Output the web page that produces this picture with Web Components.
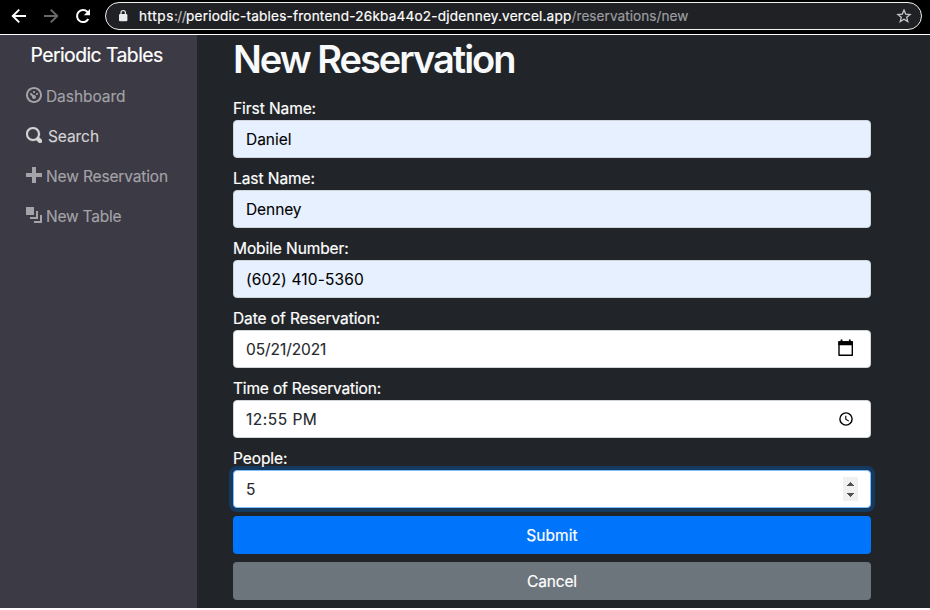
<!DOCTYPE html>
<html lang="en">
<head>
<meta charset="utf-8">
<title>New Reservation</title>
<style>
html,body{margin:0;padding:0;background:#fff}
body{width:930px;height:610px;overflow:hidden;font-family:Inter,"Liberation Sans",sans-serif;font-size:15.5px;line-height:26px}
</style>
</head>
<body>
<app-window></app-window>
<script>
const define = (name, html, setup) => customElements.define(name, class extends HTMLElement {
  connectedCallback() {
    if (this.shadowRoot) return;
    const t = document.createElement('template');
    t.innerHTML = html;
    this.attachShadow({mode: 'open'}).append(t.content.cloneNode(true));
    if (setup) setup(this, this.shadowRoot);
  }
});

// Text tracked to a given advance width (attribute w, in pixels).
define('fit-text', `<style>:host{display:inline-block;white-space:pre}</style><span><slot></slot></span>`, (el, root) => {
  const span = root.querySelector('span');
  const natural = span.getBoundingClientRect().width;
  span.style.letterSpacing = (Number(el.getAttribute('w')) - natural) / el.textContent.length + 'px';
});

const icons = {
  dashboard: 'M4 0c-2.2 0-4 1.8-4 4s1.8 4 4 4 4-1.8 4-4-1.8-4-4-4zm0 1c1.66 0 3 1.34 3 3s-1.34 3-3 3-3-1.34-3-3 1.34-3 3-3zm0 1c-.28 0-.5.22-.5.5s.22.5.5.5.5-.22.5-.5-.22-.5-.5-.5zm-1.66 1a.5.5 0 0 0-.19.84l.91.91c-.02.08-.06.16-.06.25 0 .55.45 1 1 1s1-.45 1-1-.45-1-1-1c-.09 0-.17.04-.25.06l-.91-.91a.5.5 0 0 0-.5-.16zm3.16 0c-.28 0-.5.22-.5.5s.22.5.5.5.5-.22.5-.5-.22-.5-.5-.5z',
  search: 'M3.5 0c-1.93 0-3.5 1.57-3.5 3.5s1.57 3.5 3.5 3.5c.59 0 1.17-.14 1.66-.41a1 1 0 0 0 .13.13l1 1a1.02 1.02 0 1 0 1.44-1.44l-1-1a1 1 0 0 0-.16-.13c.27-.49.44-1.06.44-1.66 0-1.93-1.55-3.5-3.5-3.5zm0 1c1.39 0 2.5 1.11 2.5 2.5 0 .66-.24 1.27-.66 1.72-.01.01-.02.02-.03.03a1 1 0 0 0-.13.13c-.44.4-1.04.63-1.69.63-1.39 0-2.5-1.11-2.5-2.5s1.11-2.5 2.5-2.5z',
  plus: 'M3 0v3h-3v2h3v3h2v-3h3v-2h-3v-3h-2z',
  layers: 'M0 0v4h4v-4h-4zm5 2v3h-3v1h4v-4h-1zm2 2v3h-3v1h4v-4h-1z'
};
define('nav-link', `<style>
:host{display:flex;height:40px;box-sizing:border-box;padding:8px 0 6px 26px;color:#a4a3a8;gap:4px;-webkit-text-stroke:.15px}
:host([active]){color:#d4d4d6;gap:6px}
svg{width:16px;height:16px;margin-top:3px;fill:currentColor}
:host([active]) svg{stroke:currentColor;stroke-width:.12px}
</style><svg viewBox="0 0 8 8"><path/></svg><slot></slot>`, (el, root) => {
  root.querySelector('path').setAttribute('d', icons[el.getAttribute('icon')]);
});

define('side-bar', `<style>
:host{display:block;width:197px;background:#3c3a44;padding-top:5px;box-sizing:border-box}
.brand{height:30px;line-height:30px;font-size:19.4px;color:#fff;padding-left:30.5px;margin-bottom:6px;-webkit-text-stroke:.2px}
</style>
<div class="brand"><fit-text w="132.2">Periodic Tables</fit-text></div>
<nav-link icon="dashboard"><fit-text w="79.4">Dashboard</fit-text></nav-link>
<nav-link icon="search" active><fit-text w="51">Search</fit-text></nav-link>
<nav-link icon="plus"><fit-text w="122">New Reservation</fit-text></nav-link>
<nav-link icon="layers"><fit-text w="75.3">New Table</fit-text></nav-link>`);

define('browser-bar', `<style>
:host{display:flex;box-sizing:border-box;height:35px;padding:2px 8px 0 11px;background:#000;border-bottom:1px solid #fff}
svg{display:block;fill:none}
.nav{display:flex;gap:16px;width:94px;padding-top:6px}
.box{flex:1;height:28px;box-sizing:border-box;border:1px solid #f1f1f1;border-radius:14px;background:#202124;display:flex;align-items:center;padding:0 9px 0 11px}
.url{flex:1;margin-left:10px;font-size:13.6px;line-height:24px;color:#fff;display:flex;-webkit-text-stroke:.2px}
.grey{color:#9b9da0}.sep{color:#b5b6b8}
</style>
<div class="nav">
<svg width="16" height="16" viewBox="0 0 16 16" stroke="#fff" stroke-width="2"><path d="M15 8H2.2M8.2 1.6 1.8 8l6.4 6.4"/></svg>
<svg width="16" height="16" viewBox="0 0 16 16" stroke="#69696c" stroke-width="2"><path d="M1 8h12.8M7.8 1.6 14.2 8l-6.4 6.4"/></svg>
<svg width="16" height="16" viewBox="0 0 16 16"><path d="M13.3 11A6 6 0 1 1 12.3 3.8L14 5.5" stroke="#fff" stroke-width="2"/><path d="M15 1v6.2H8.8z" fill="#fff"/></svg>
</div>
<div class="box">
<svg width="12" height="14" viewBox="0 0 12 14"><rect x="2" y="5" width="8.4" height="7.2" rx="1" fill="#e8eaed"/><path d="M4 5.5V3.7a2.2 2.2 0 0 1 4.4 0v1.8" stroke="#e8eaed" stroke-width="1.2"/></svg>
<div class="url"><fit-text w="35">https</fit-text><fit-text class="sep" w="12">://</fit-text><fit-text w="385.5">periodic-tables-frontend-26kba44o2-djdenney.vercel.app</fit-text><fit-text class="grey" w="117">/reservations/new</fit-text></div>
<svg width="16" height="16" viewBox="0 0 16 16" stroke="#c5c6c8" stroke-width="1.3"><path d="m8 2.1 1.7 4 4.4.4-3.4 2.8 1.1 4.3L8 11.3l-3.8 2.3 1.1-4.3-3.4-2.8 4.4-.4z"/></svg>
</div>`);

define('form-field', `<style>
:host{display:block;height:62px;margin-bottom:8px;color:#fff;-webkit-text-stroke:.2px}
.label{height:24px}
.control{display:flex;box-sizing:border-box;height:38px;border:1px solid #ced4da;border-radius:4px;background:#fff;color:#25282c;padding:6px 12px 4px;justify-content:space-between;-webkit-text-stroke:.1px}
:host([filled]) .control{background:#e7f0fe;color:#000}
:host([focused]) .control{border-color:#80bdff;box-shadow:0 0 0 4px #153a60}
::slotted(svg){display:block}
::slotted(svg.picker){margin-right:3px}
</style><div class="label"><slot name="label"></slot></div><div class="control"><slot></slot><slot name="icon"></slot></div>`);

define('form-button', `<style>
:host{display:block;height:38px;line-height:40px;border-radius:4px;background:#0075fc;color:#fff;text-align:center;margin-bottom:8px;-webkit-text-stroke:.2px}
:host([secondary]){background:#6c757b}
</style><slot></slot>`);

define('reservation-form', `<style>
:host{display:block;flex:1;background:#212529;padding:0 59px 0 36px}
h1{margin:0 0 13px;font-size:38px;line-height:48px;height:48px;font-weight:600;color:#f8f9fa}
</style>
<h1><fit-text w="281.5">New Reservation</fit-text></h1>
<form-field filled><fit-text slot="label" w="83">First Name:</fit-text><fit-text w="45.5">Daniel</fit-text></form-field>
<form-field filled><fit-text slot="label" w="82">Last Name:</fit-text><fit-text w="55.5">Denney</fit-text></form-field>
<form-field filled><fit-text slot="label" w="115.7">Mobile Number:</fit-text><fit-text w="118">(602) 410-5360</fit-text></form-field>
<form-field><fit-text slot="label" w="147">Date of Reservation:</fit-text><fit-text w="80.3">05/21/2021</fit-text>
<svg class="picker" slot="icon" width="18" height="24" viewBox="0 0 18 24"><path d="M2 5h13.3v13.3H2z" fill="none" stroke="#000" stroke-width="1.4" stroke-linejoin="round"/><path d="M1.3 4.2H16v4H1.3zM3.6 2.5h1.8V5H3.6zM11.9 2.5h1.8V5h-1.8z"/></svg></form-field>
<form-field><fit-text slot="label" w="148">Time of Reservation:</fit-text><fit-text w="71.3">12:55 PM</fit-text>
<svg class="picker" slot="icon" width="18" height="24" viewBox="0 0 18 24" fill="none" stroke="#000"><circle cx="9" cy="12" r="6.1" stroke-width="1.4"/><path d="M8.8 8.8v3.5l3 1.8" stroke-width="1.1"/></svg></form-field>
<form-field focused><fit-text slot="label" w="54.3">People:</fit-text><fit-text w="10">5</fit-text>
<svg slot="icon" width="15" height="24" viewBox="0 0 15 24" shape-rendering="crispEdges"><path d="M0 0h15v24H0z" fill="#f0f0f0"/><path d="M4 9h7L8 5H7zM4 16h7l-3 4H7z" fill="#505050"/></svg></form-field>
<form-button><fit-text w="51.5">Submit</fit-text></form-button>
<form-button secondary><fit-text w="49.8">Cancel</fit-text></form-button>`);

define('app-window', `<style>
:host{display:block;height:608px}
main{display:flex;height:573px}
</style><browser-bar></browser-bar><main><side-bar></side-bar><reservation-form></reservation-form></main>`);
</script>
</body>
</html>
